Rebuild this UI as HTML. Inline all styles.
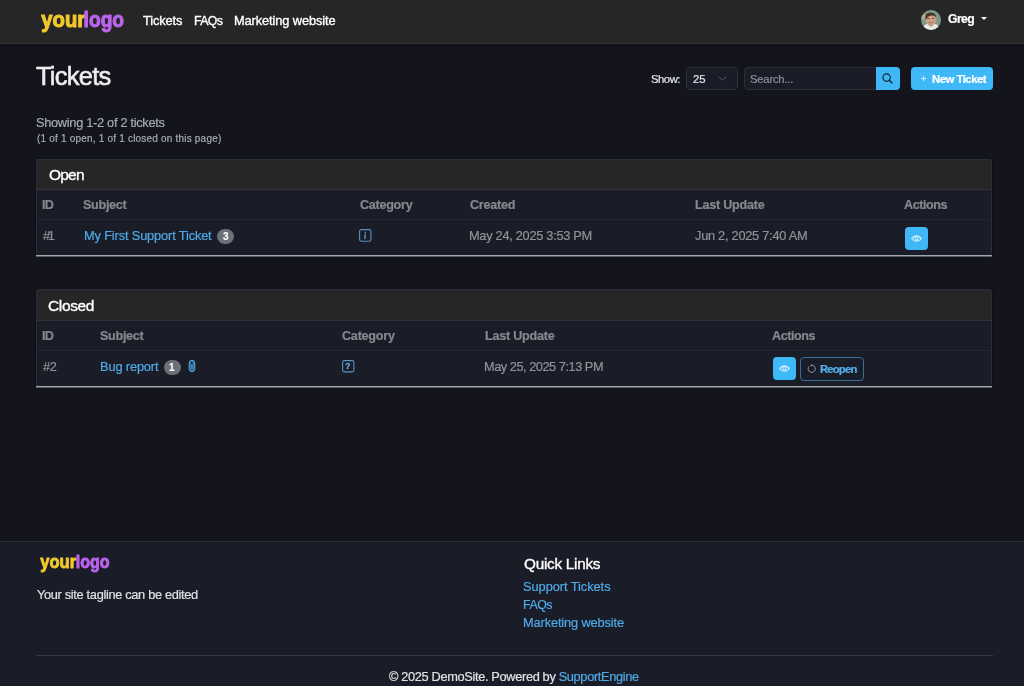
<!DOCTYPE html>
<html>
<head>
<meta charset="utf-8">
<style>
*{box-sizing:border-box;margin:0;padding:0}
html,body{width:1024px;height:686px;overflow:hidden}
body{background:#13141c;font-family:"Liberation Sans",sans-serif;color:#dee2e6;position:relative}
.t{position:absolute;white-space:nowrap;line-height:1;will-change:transform;-webkit-text-stroke:0.2px currentColor}
.a{position:absolute}
#nav{position:absolute;left:0;top:0;width:1024px;height:44px;background:#262626;border-bottom:1px solid #34333a;box-shadow:0 1px 0 #111217}
.card{position:absolute;left:36px;width:956px;background:#1a1c27;border:1px solid #2b2d37;border-radius:2px 2px 4px 4px;overflow:hidden;box-shadow:0 1px 3px rgba(0,0,0,.35)}
.ch{position:absolute;left:0;top:0;right:0;height:30px;background:#262626;border-bottom:1px solid #30323a}
.thd{position:absolute;left:0;right:0;top:30px;height:30px;border-bottom:1px solid #242631}
.bl{position:absolute;left:36px;width:956px;height:2px;background:linear-gradient(#a3a6ad 0,#a3a6ad 50%,#5a5c64 50%,#5a5c64 100%)}
.badge{position:absolute;width:17px;height:15px;border-radius:8px;background:#6b6f77}
.btnp{position:absolute;background:#3fb8f8;border-radius:4px}
svg{position:absolute;overflow:visible;will-change:transform}
</style>
</head>
<body>
<div id="nav"></div>
<!-- nav logo -->
<svg class="a" style="left:0;top:0" width="1024" height="44">
  <text x="41.3" y="26.6" font-family="Liberation Sans" font-weight="700" font-size="22.8" fill="#f1c92c" stroke="#f1c92c" stroke-width="1.1" stroke-linejoin="round" textLength="43.9" lengthAdjust="spacingAndGlyphs">your</text>
  <text x="83.6" y="26.6" font-family="Liberation Sans" font-weight="700" font-size="22.8" fill="#bb64ee" stroke="#bb64ee" stroke-width="1.1" stroke-linejoin="round" textLength="40.5" lengthAdjust="spacingAndGlyphs">logo</text>
</svg>
<!-- avatar -->
<svg class="a" style="left:921px;top:10px" width="20" height="20" viewBox="0 0 20 20">
  <defs><clipPath id="av"><circle cx="10" cy="10" r="10"/></clipPath></defs>
  <g clip-path="url(#av)">
    <rect width="20" height="20" fill="#7c9a86"/>
    <circle cx="2.5" cy="7" r="2.6" fill="#a9b48f"/>
    <path d="M2 20 L3 16 Q5 13.2 7 14.2 L10 17 L13 14.2 Q15.5 13.2 17 16 L18 20Z" fill="#eeebe8"/>
    <ellipse cx="9.8" cy="9.3" rx="5.3" ry="6.4" fill="#cf9f84"/>
    <path d="M4.2 9 Q3.8 2.6 9.6 2.6 Q15.4 2.8 15.2 8.4 Q14.4 5.2 11 5.6 Q6.8 5.6 5.2 9.6Z" fill="#4a3427"/>
    <path d="M6.5 8.6 h2 M11.2 8.4 h2" stroke="#5a3a2c" stroke-width="0.9"/>
    <path d="M7.4 12.2 Q9.8 13.8 12.2 12" stroke="#a87060" stroke-width="0.8" fill="none"/>
  </g>
</svg>
<div class="a" style="left:981px;top:17px;width:0;height:0;border-left:3px solid transparent;border-right:3px solid transparent;border-top:3px solid #fff"></div>

<!-- controls -->
<div class="a" style="left:686px;top:67px;width:52px;height:23px;background:#1a1c27;border:1px solid #2c2e38;border-radius:4px"></div>
<svg class="a" style="left:718px;top:76px" width="9" height="5"><path d="M0.8 0.8 L4.5 4.2 L8.2 0.8" fill="none" stroke="#55585f" stroke-width="1"/></svg>
<div class="a" style="left:744px;top:67px;width:133px;height:23px;background:#1a1c27;border:1px solid #2c2e38;border-radius:4px 0 0 4px"></div>
<div class="btnp" style="left:876px;top:67px;width:24px;height:23px;border-radius:0 4px 4px 0"></div>
<svg class="a" style="left:876px;top:67px" width="24" height="23"><circle cx="10.6" cy="10.6" r="3.7" fill="none" stroke="#15202a" stroke-width="1.15"/><path d="M13.3 13.3 L16 16" stroke="#15202a" stroke-width="1.3" stroke-linecap="round"/></svg>
<div class="btnp" style="left:911px;top:67px;width:82px;height:23px"></div>
<svg class="a" style="left:911px;top:67px" width="20" height="23"><path d="M12.6 9 V14.2 M10 11.6 H15.2" stroke="#e8f6fe" stroke-width="0.9" /></svg>

<!-- Open card -->
<div class="card" style="top:159px;height:97px"><div class="ch"></div><div class="thd"></div></div>
<div class="bl" style="top:255px"></div>
<div class="badge" style="left:217px;top:229px"></div>
<svg class="a" style="left:359px;top:229px" width="13" height="13"><rect x="0.6" y="0.6" width="11.3" height="11.6" rx="1.6" fill="none" stroke="#5a93c0" stroke-width="1.1"/><path d="M6.4 3.3 L6.3 3.9 M6.2 5.6 L5.9 9.6" stroke="#6aaad8" stroke-width="1.2" stroke-linecap="round"/></svg>
<div class="btnp" style="left:905px;top:227px;width:23px;height:23px"></div>
<svg class="a" style="left:905px;top:227px" width="23" height="23"><path d="M6.6 11.5 Q11.5 6 16.4 11.5 Q11.5 17 6.6 11.5Z" fill="none" stroke="#f4fbff" stroke-width="1.05"/><circle cx="11.5" cy="11.5" r="1.6" fill="none" stroke="#f4fbff" stroke-width="1"/></svg>

<!-- Closed card -->
<div class="card" style="top:289px;height:98px"><div class="ch" style="height:31px"></div><div class="thd" style="top:31px"></div></div>
<div class="bl" style="top:386px"></div>
<div class="badge" style="left:164px;top:360px"></div>
<svg class="a" style="left:188px;top:359px" width="8" height="14"><rect x="1.2" y="1.4" width="5.6" height="11.2" rx="2.8" fill="#2f6a96" stroke="#5cb0e4" stroke-width="1"/><path d="M4 6 V10" stroke="#4a9ad0" stroke-width="1.2"/><circle cx="3.6" cy="3.6" r="0.9" fill="#10131a"/></svg>
<svg class="a" style="left:342px;top:360px" width="13" height="13"><rect x="0.6" y="0.6" width="11.3" height="11.3" rx="1.6" fill="none" stroke="#5a93c0" stroke-width="1.1"/></svg>
<div class="btnp" style="left:773px;top:357px;width:23px;height:23px"></div>
<svg class="a" style="left:773px;top:357px" width="23" height="23"><path d="M6.6 11.5 Q11.5 6 16.4 11.5 Q11.5 17 6.6 11.5Z" fill="none" stroke="#f4fbff" stroke-width="1.05"/><circle cx="11.5" cy="11.5" r="1.6" fill="none" stroke="#f4fbff" stroke-width="1"/></svg>
<div class="a" style="left:800px;top:357px;width:64px;height:24px;border:1px solid #366e9b;border-radius:4px"></div>
<svg class="a" style="left:806px;top:363px" width="11" height="11"><path d="M3.1 3.3 A3.6 3.6 0 1 0 5.3 2.2" fill="none" stroke="#8c9cab" stroke-width="1"/><path d="M4.8 0.9 L6.5 2.3 L4.8 3.7Z" fill="#8c9cab"/></svg>

<!-- Footer -->
<div class="a" style="left:0;top:541px;width:1024px;height:145px;background:#1a1c27;border-top:1px solid #2a2c36"></div>
<svg class="a" style="left:0;top:540px" width="200" height="40">
  <text x="40.3" y="28.3" font-family="Liberation Sans" font-weight="700" font-size="18.9" fill="#f1c92c" stroke="#f1c92c" stroke-width="0.9" stroke-linejoin="round" textLength="35.8" lengthAdjust="spacingAndGlyphs">your</text>
  <text x="75.7" y="28.3" font-family="Liberation Sans" font-weight="700" font-size="18.9" fill="#bb64ee" stroke="#bb64ee" stroke-width="0.9" stroke-linejoin="round" textLength="33.9" lengthAdjust="spacingAndGlyphs">logo</text>
</svg>
<div class="a" style="left:36px;top:655px;width:957px;height:1px;background:#373943"></div>

<div class=t style='left:143.48px;top:15px;font-size:12.8px;font-weight:400;color:#ffffff;letter-spacing:-0.129px;-webkit-text-stroke:0.35px currentColor;'>Tickets</div>
<div class=t style='left:194.35px;top:15px;font-size:12.3px;font-weight:400;color:#ffffff;letter-spacing:-0.655px;-webkit-text-stroke:0.35px currentColor;'>FAQs</div>
<div class=t style='left:233.86px;top:15px;font-size:12.8px;font-weight:400;color:#ffffff;letter-spacing:-0.099px;-webkit-text-stroke:0.35px currentColor;'>Marketing website</div>
<div class=t style='left:948.23px;top:13px;font-size:12.2px;font-weight:700;color:#ffffff;letter-spacing:-0.589px;'>Greg</div>
<div class=t style='left:36.27px;top:64px;font-size:25.5px;font-weight:400;color:#eeeef0;letter-spacing:-0.764px;-webkit-text-stroke:0.55px currentColor;'>Tickets</div>
<div class=t style='left:651.17px;top:74px;font-size:11.3px;font-weight:400;color:#e4e5e8;letter-spacing:-0.476px;'>Show:</div>
<div class=t style='left:692.82px;top:74px;font-size:11.3px;font-weight:400;color:#e4e5e8;letter-spacing:-0.031px;'>25</div>
<div class=t style='left:749.59px;top:74px;font-size:11.3px;font-weight:400;color:#8c8f96;letter-spacing:-0.236px;'>Search...</div>
<div class=t style='left:931.61px;top:74px;font-size:11.3px;font-weight:700;color:#ffffff;letter-spacing:-0.479px;'>New Ticket</div>
<div class=t style='left:36.14px;top:117px;font-size:12.8px;font-weight:400;color:#a8abb1;letter-spacing:-0.302px;'>Showing 1-2 of 2 tickets</div>
<div class=t style='left:36.70px;top:134px;font-size:10.0px;font-weight:400;color:#a8abb1;letter-spacing:0.200px;'>(1 of 1 open, 1 of 1 closed on this page)</div>
<div class=t style='left:49.15px;top:167px;font-size:15.5px;font-weight:400;color:#ffffff;letter-spacing:-0.805px;-webkit-text-stroke:0.35px currentColor;'>Open</div>
<div class=t style='left:42.31px;top:199px;font-size:12.6px;font-weight:700;color:#86888e;letter-spacing:-0.653px;'>ID</div>
<div class=t style='left:83.49px;top:199px;font-size:12.6px;font-weight:700;color:#86888e;letter-spacing:-0.298px;'>Subject</div>
<div class=t style='left:359.54px;top:199px;font-size:12.6px;font-weight:700;color:#86888e;letter-spacing:-0.277px;'>Category</div>
<div class=t style='left:469.66px;top:199px;font-size:12.6px;font-weight:700;color:#86888e;letter-spacing:-0.234px;'>Created</div>
<div class=t style='left:694.65px;top:199px;font-size:12.6px;font-weight:700;color:#86888e;letter-spacing:-0.236px;'>Last Update</div>
<div class=t style='left:904.47px;top:199px;font-size:12.6px;font-weight:700;color:#86888e;letter-spacing:-0.444px;'>Actions</div>
<div class=t style='left:42.61px;top:230px;font-size:12.8px;font-weight:400;color:#909298;letter-spacing:-2.243px;'>#1</div>
<div class=t style='left:83.59px;top:230px;font-size:12.8px;font-weight:400;color:#4faae8;letter-spacing:-0.144px;'>My First Support Ticket</div>
<div class=t style='left:468.51px;top:230px;font-size:12.8px;font-weight:400;color:#909298;letter-spacing:-0.291px;'>May 24, 2025 3:53 PM</div>
<div class=t style='left:695.23px;top:230px;font-size:12.8px;font-weight:400;color:#909298;letter-spacing:-0.266px;'>Jun 2, 2025 7:40 AM</div>
<div class=t style='left:48.46px;top:298px;font-size:15.5px;font-weight:400;color:#ffffff;letter-spacing:-0.351px;-webkit-text-stroke:0.35px currentColor;'>Closed</div>
<div class=t style='left:42.31px;top:330px;font-size:12.6px;font-weight:700;color:#86888e;letter-spacing:-0.653px;'>ID</div>
<div class=t style='left:99.81px;top:330px;font-size:12.6px;font-weight:700;color:#86888e;letter-spacing:-0.303px;'>Subject</div>
<div class=t style='left:341.50px;top:330px;font-size:12.6px;font-weight:700;color:#86888e;letter-spacing:-0.231px;'>Category</div>
<div class=t style='left:484.61px;top:330px;font-size:12.6px;font-weight:700;color:#86888e;letter-spacing:-0.243px;'>Last Update</div>
<div class=t style='left:772.47px;top:330px;font-size:12.6px;font-weight:700;color:#86888e;letter-spacing:-0.444px;'>Actions</div>
<div class=t style='left:42.61px;top:361px;font-size:12.8px;font-weight:400;color:#909298;letter-spacing:-0.267px;'>#2</div>
<div class=t style='left:99.59px;top:361px;font-size:12.8px;font-weight:400;color:#4faae8;letter-spacing:-0.138px;'>Bug report</div>
<div class=t style='left:484.49px;top:361px;font-size:12.8px;font-weight:400;color:#909298;letter-spacing:-0.485px;'>May 25, 2025 7:13 PM</div>
<div class=t style='left:819.62px;top:364px;font-size:11.3px;font-weight:700;color:#55b2ee;letter-spacing:-0.828px;'>Reopen</div>
<div class=t style='left:36.66px;top:589px;font-size:12.8px;font-weight:400;color:#dfe1e5;letter-spacing:-0.327px;'>Your site tagline can be edited</div>
<div class=t style='left:523.65px;top:556px;font-size:15.3px;font-weight:400;color:#ffffff;letter-spacing:-0.258px;-webkit-text-stroke:0.35px currentColor;'>Quick Links</div>
<div class=t style='left:523.22px;top:581px;font-size:12.8px;font-weight:400;color:#4faae8;letter-spacing:-0.048px;'>Support Tickets</div>
<div class=t style='left:522.91px;top:599px;font-size:12.3px;font-weight:400;color:#4faae8;letter-spacing:-0.440px;'>FAQs</div>
<div class=t style='left:522.86px;top:617px;font-size:12.8px;font-weight:400;color:#4faae8;letter-spacing:-0.130px;'>Marketing website</div>
<div class=t style='left:389.35px;top:671px;font-size:12.8px;font-weight:400;color:#dfe1e5;letter-spacing:-0.350px;'>© 2025 DemoSite. Powered by <span style='color:#4faae8'>SupportEngine</span></div>
<div class="t" style="left:223.3px;top:232px;font-size:10px;font-weight:700;color:#fff">3</div>
<div class="t" style="left:169.4px;top:363px;font-size:10px;font-weight:700;color:#fff">1</div>
<div class="t" style="left:345px;top:362px;font-size:9px;font-weight:700;color:#6cb7ea">?</div>
</body>
</html>
